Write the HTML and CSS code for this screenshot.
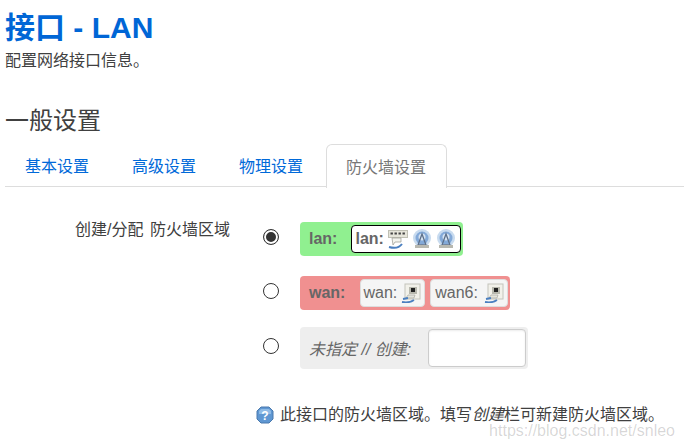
FILE: index.html
```html
<!DOCTYPE html>
<html lang="en">
<head>
    <meta charset="UTF-8">
    <title>接口 - LAN</title>
    <link rel="stylesheet" href="styles.css">
</head>
<body>
    <svg class="defs" width="0" height="0">
        <symbol id="ethernet" viewBox="0 0 20 20">
            <rect x="4" y="1" width="15" height="15" fill="#f2f1ea" stroke="#c4c4bc"/>
            <rect x="8" y="4" width="8" height="7" fill="#b8b8ae"/>
            <rect x="10" y="5" width="4" height="4" fill="#222"/>
            <path d="M7 12l-2 3h8l1-3z" fill="#e4e4dc" stroke="#a0a098" stroke-width="0.6"/>
            <path d="M1 19c5 1 9 0 12-2M2 16l5-1" stroke="#4a7fc0" stroke-width="1.8" fill="none"/>
        </symbol>
        <symbol id="switch" viewBox="0 0 20 20">
            <rect x="0.5" y="1.5" width="19" height="7" fill="#e6e5da" stroke="#c0c0b4"/>
            <path d="M2.5 4.5h2.4M6.5 4.5h2.4M10.5 4.5h2.4M14.5 4.5h2.4" stroke="#444" stroke-width="2.2"/>
            <path d="M4 9h9v4H7l-2 3z" fill="#f4f4ee" stroke="#9a9a90" stroke-width="0.7"/>
            <path d="M1 18c5 1.500 10 1 13-3" stroke="#4a7fc0" stroke-width="2" fill="none"/>
        </symbol>
        <symbol id="wifi" viewBox="0 0 20 20">
            <circle cx="10" cy="9" r="9" fill="#c8dbef"/>
            <circle cx="10" cy="9" r="6.500" fill="#83a9d8"/>
            <circle cx="10" cy="8" r="3.500" fill="#d5e3f2"/>
            <path d="M10 5l-4 11h8z" fill="none" stroke="#5d708a" stroke-width="1.300"/>
            <rect x="3" y="16" width="14" height="3" fill="#b8b8b0"/>
        </symbol>
    </svg>

    <h1 class="title">接口 - LAN</h1>
    <div class="desc">配置网络接口信息。</div>

    <h2 class="section">一般设置</h2>
    <ul class="tabs">
        <li class="tab"><a href="#">基本设置</a></li>
        <li class="tab"><a href="#">高级设置</a></li>
        <li class="tab"><a href="#">物理设置</a></li>
        <li class="tab active"><a href="#">防火墙设置</a></li>
    </ul>

    <div class="field">
        <label class="field-label">创建/分配 防火墙区域</label>
        <div class="field-value">
            <div class="zone-row">
                <span class="radio checked"></span>
                <div class="zone zone-lan">
                    <strong class="zone-name">lan:</strong>
                    <span class="iface selected"><b>lan:</b>
                        <svg class="icon"><use href="#switch"/></svg>
                        <svg class="icon"><use href="#wifi"/></svg>
                        <svg class="icon"><use href="#wifi"/></svg>
                    </span>
                </div>
            </div>
            <div class="zone-row">
                <span class="radio"></span>
                <div class="zone zone-wan">
                    <strong class="zone-name">wan:</strong>
                    <span class="iface">wan: <svg class="icon"><use href="#ethernet"/></svg></span>
                    <span class="iface">wan6: <svg class="icon"><use href="#ethernet"/></svg></span>
                </div>
            </div>
            <div class="zone-row last">
                <span class="radio"></span>
                <div class="zone zone-new">
                    <em class="zone-new-label">未指定 // 创建:</em>
                    <input class="zone-input" type="text">
                </div>
            </div>
        </div>
    </div>

    <div class="help">
        <svg class="help-icon" viewBox="0 0 18 18">
            <path d="M5 1h8l4 4v8l-4 4H5l-4-4V5z" fill="#5f97d2" stroke="#4a79ad"/>
            <path d="M5 3h8l2 2v3H3V5z" fill="#8fbbe6"/>
            <text x="9" y="13.500" class="help-mark">?</text>
        </svg>
        <span>此接口的防火墙区域。填写<em>创建</em>栏可新建防火墙区域。</span>
    </div>

    <div class="watermark">https://blog.csdn.net/snleo</div>
</body>
</html>
```

FILE: styles.css
```css
body {
    margin: 0;
    padding: 0 0 0 5px;
    height: 448px;
    overflow: hidden;
    position: relative;
    background: #fff;
    color: #404040;
    font-family: "Liberation Sans", "Noto Sans CJK SC", sans-serif;
    font-size: 16px;
}
.defs {
    position: absolute;
}
.title {
    margin: 0;
    padding-top: 10px;
    font-size: 30px;
    line-height: 36px;
    font-weight: bold;
    color: #0066d6;
}
.desc {
    margin-top: 4px;
    line-height: 22px;
}
.section {
    margin: 31px 0 0;
    font-size: 24px;
    line-height: 36px;
    font-weight: normal;
}
.tabs {
    display: flex;
    list-style: none;
    margin: 5px 0 0;
    padding: 0;
    height: 42px;
    border-bottom: 1px solid #ddd;
}
.tab {
    padding: 0 20px;
    margin-right: 3px;
    line-height: 46px;
}
.tab a {
    color: #0069d9;
    text-decoration: none;
}
.tab.active {
    height: 43px;
    padding-left: 19px;
    background: #fff;
    border: 1px solid #ddd;
    border-bottom: 0;
    border-radius: 6px 6px 0 0;
}
.tab.active a {
    color: #777;
}
.field {
    display: flex;
    margin-top: 32px;
}
.field-label {
    width: 225px;
    text-align: right;
    line-height: 22px;
    word-spacing: 2px;
    flex: none;
}
.field-value {
    margin-left: 33px;
    margin-top: 3px;
}
.zone-row {
    display: flex;
    align-items: flex-start;
    height: 54px;
}
.zone-row.last {
    height: auto;
    margin-top: -3px;
}
.radio {
    flex: none;
    box-sizing: border-box;
    width: 16px;
    height: 16px;
    margin-top: 7px;
    margin-right: 21px;
    border: 1px solid #333;
    border-radius: 50%;
    background: #fff;
}
.zone-row.last .radio {
    margin-top: 11px;
}
.radio.checked {
    box-shadow: inset 0 0 0 2px #fff, inset 0 0 0 8px #333;
}
.zone {
    display: flex;
    align-items: center;
    height: 34px;
    box-sizing: border-box;
    padding: 0 2px 0 9px;
    border-radius: 4px;
    color: #666;
}
.zone-lan {
    background: #90f090;
}
.zone-wan {
    background: #f09090;
}
.zone-new {
    height: 42px;
    background: #eee;
}
.zone-name {
    margin-right: 15px;
}
.zone-lan .zone-name {
    margin-right: 14px;
}
.iface {
    display: flex;
    align-items: center;
    gap: 4px;
    height: 28px;
    box-sizing: border-box;
    padding: 0 3px 0 2px;
    margin-right: 5px;
    background: #f5f5f5;
    border: 1px solid #ddd;
    border-radius: 4px;
    white-space: nowrap;
}
.zone-wan .iface:last-child {
    gap: 6px;
    padding-left: 4px;
    margin-right: 0;
}
.zone-lan .iface {
    margin-right: 0;
}
.iface.selected {
    padding: 0 4px 0 3px;
    background: #fff;
    border-color: #000;
}
.icon {
    width: 20px;
    height: 20px;
}
.zone-new-label {
    margin-right: 17px;
}
.zone-input {
    width: 98px;
    height: 38px;
    box-sizing: border-box;
    padding: 0 6px;
    background: #fff;
    border: 1px solid #ccc;
    border-radius: 4px;
    box-shadow: inset 0 1px 2px rgba(0, 0, 0, 0.08);
}
.help {
    display: flex;
    align-items: center;
    margin: 35px 0 0 251px;
    line-height: 22px;
    white-space: nowrap;
}
.help-icon {
    width: 18px;
    height: 18px;
    margin-right: 6px;
}
.help-mark {
    font-size: 12px;
    font-weight: bold;
    fill: #fff;
    text-anchor: middle;
}
.watermark {
    position: absolute;
    right: 9px;
    bottom: 8px;
    font-size: 16px;
    color: rgba(0, 0, 0, 0.17);
}
```
